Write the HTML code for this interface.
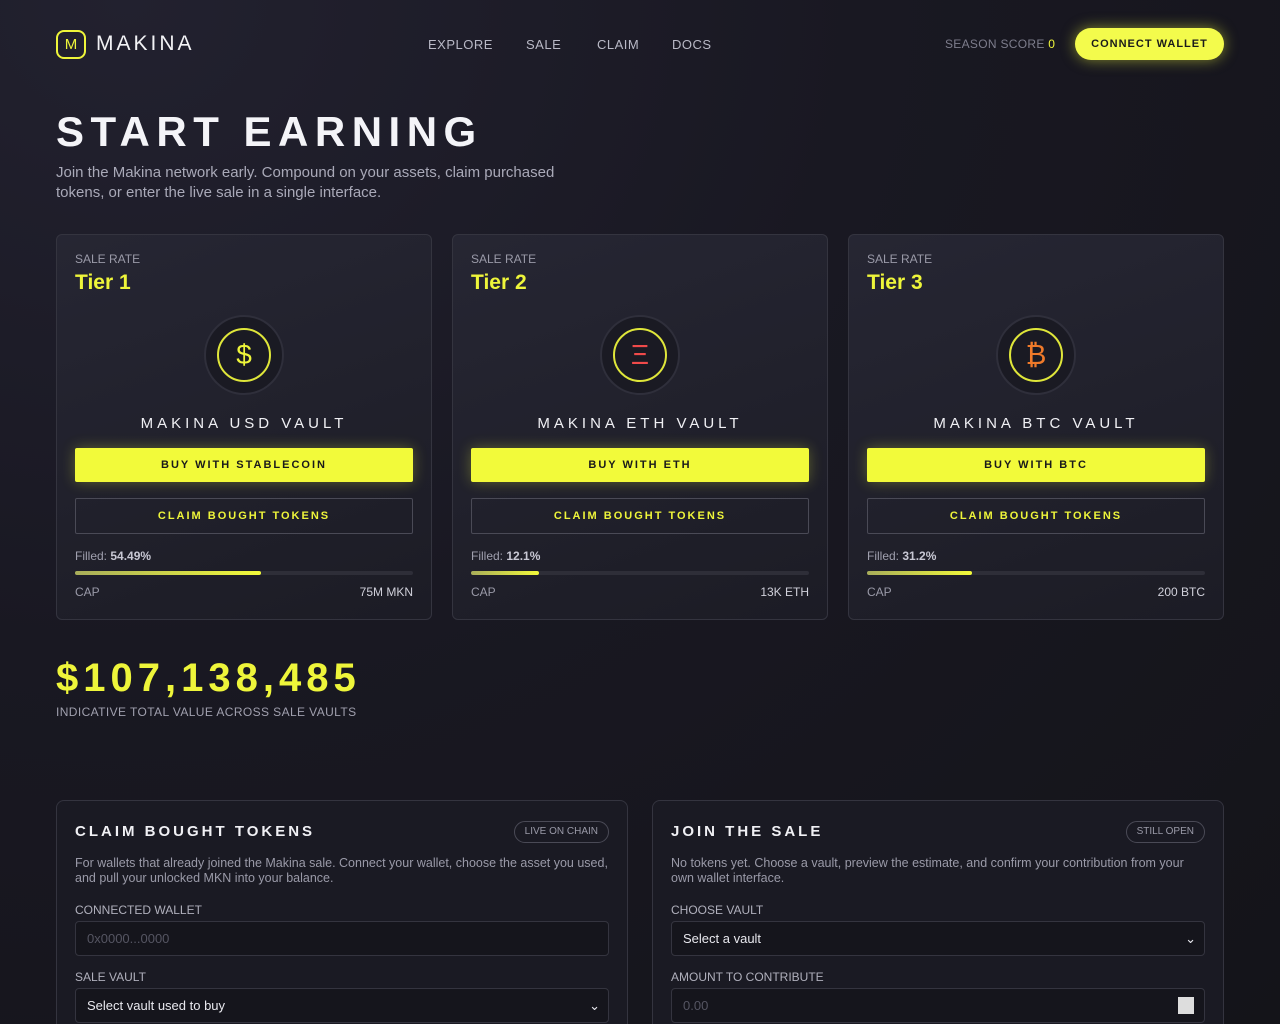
<!DOCTYPE html>
<html style="background:#141419"><head><meta charset="utf-8"><style>
*{box-sizing:border-box;margin:0;padding:0}
html,body{width:1280px;height:1024px;overflow:hidden}
body{background:radial-gradient(ellipse at 10% 0%,#22212f 0%,#191822 45%,#141419 100%);font-family:"Liberation Sans",sans-serif;color:#e8e8ee;position:relative}
.a{position:absolute}
.logo{left:56px;top:30px;width:30px;height:29px;border:2px solid #eef53a;border-radius:8px;color:#eef53a;font-size:15px;text-align:center;line-height:25px}
.brand{left:96px;top:32px;font-size:21px;letter-spacing:3px;color:#f2f2f5}
.nav{top:37px;font-size:13px;color:#b9b9c6;letter-spacing:.5px}
.score{left:945px;top:37px;font-size:12px;color:#7d7d8c;letter-spacing:.3px}
.cw{left:1075px;top:28px;width:149px;height:32px;border-radius:16px;background:#f3fb4c;box-shadow:0 0 14px rgba(240,250,60,.5);color:#1a1a1a;font-weight:bold;font-size:11px;letter-spacing:1px;text-align:center;line-height:32px}
h1{position:absolute;left:56px;top:108px;font-size:42px;letter-spacing:6.5px;font-weight:bold;color:#f4f4f8}
.sub{left:56px;top:163px;font-size:15px;line-height:20px;color:#a9a9b8;width:500px}
.card{top:234px;width:376px;height:386px;border:1px solid #34343f;border-radius:6px;background:linear-gradient(160deg,#262633,#1c1c25)}
.sr{position:absolute;left:18px;top:17px;font-size:12px;color:#9a9aa8}
.tier{position:absolute;left:18px;top:36px;font-size:21px;font-weight:bold;color:#eef53a}
.ico{position:absolute;left:147px;top:80px;width:80px;height:80px;border-radius:50%;background:#1a1a23;border:2px solid #2f2f3b}
.ico div{position:absolute;left:11px;top:11px;width:54px;height:54px;border:2px solid #dfe63a;border-radius:50%;text-align:center;line-height:50px;font-size:28px}
.vn{position:absolute;left:0;width:100%;top:180px;text-align:center;font-size:15px;letter-spacing:4px;color:#f0f0f4}
.buy{position:absolute;left:18px;top:213px;width:338px;height:34px;background:#f2fa3a;border-radius:2px;box-shadow:0 0 14px rgba(240,250,60,.3);color:#1a1a1a;font-weight:bold;font-size:11px;letter-spacing:2px;text-align:center;line-height:34px}
.clm{position:absolute;left:18px;top:263px;width:338px;height:36px;border:1px solid #4a4a56;border-radius:2px;color:#eef53a;font-weight:bold;font-size:11px;letter-spacing:2px;text-align:center;line-height:34px}
.fl{position:absolute;left:18px;top:314px;font-size:12px;color:#a0a0ae}
.fl b{color:#c8c8d4}
.bar{position:absolute;left:18px;top:336px;width:338px;height:4px;background:#2e2e38;border-radius:2px}
.bar i{display:block;height:4px;background:linear-gradient(90deg,#a8ad5a,#f2fa3a);border-radius:2px}
.cap{position:absolute;left:18px;top:350px;width:338px;font-size:12px;color:#9a9aa8}
.cap span{float:right;color:#d0d0da}
.big{left:56px;top:656px;font-size:40px;font-weight:bold;color:#eef53a;letter-spacing:5px}
.ind{left:56px;top:705px;font-size:12px;color:#a0a0ae;letter-spacing:.4px}
.pn{top:800px;width:572px;height:240px;border:1px solid #34343f;border-radius:8px;background:#1a1a23}
.pt{position:absolute;left:18px;top:22px;font-size:15px;letter-spacing:3px;font-weight:bold;color:#f0f0f4}
.pill{position:absolute;right:18px;top:20px;height:22px;border:1px solid #4a4a56;border-radius:11px;padding:0 10px;font-size:10px;line-height:20px;color:#9a9aa8}
.pd{position:absolute;left:18px;top:55px;width:535px;font-size:12.5px;line-height:15px;color:#9a9aa8}
.lb{position:absolute;left:18px;font-size:12px;color:#b0b0bc}
.in{position:absolute;left:18px;width:534px;height:35px;border:1px solid #34343f;border-radius:4px;background:#15151c;font-size:13px;line-height:33px;padding-left:11px}
</style></head><body>
<div class="a logo">M</div><div class="a brand">MAKINA</div>
<div class="a nav" style="left:428px">EXPLORE</div>
<div class="a nav" style="left:526px">SALE</div>
<div class="a nav" style="left:597px">CLAIM</div>
<div class="a nav" style="left:672px">DOCS</div>
<div class="a score">SEASON SCORE <span style="color:#eef53a">0</span></div>
<div class="a cw">CONNECT WALLET</div>
<h1>START EARNING</h1>
<div class="a sub">Join the Makina network early. Compound on your assets, claim purchased tokens, or enter the live sale in a single interface.</div>

<div class="a card" style="left:56px"><div class="sr">SALE RATE</div><div class="tier">Tier 1</div><div class="ico"><div style="color:#eef53a">$</div></div><div class="vn">MAKINA USD VAULT</div><div class="buy">BUY WITH STABLECOIN</div><div class="clm">CLAIM BOUGHT TOKENS</div><div class="fl">Filled: <b>54.49%</b></div><div class="bar"><i style="width:55%"></i></div><div class="cap">CAP<span>75M MKN</span></div></div>
<div class="a card" style="left:452px"><div class="sr">SALE RATE</div><div class="tier">Tier 2</div><div class="ico"><div style="color:#f04a4a">Ξ</div></div><div class="vn">MAKINA ETH VAULT</div><div class="buy">BUY WITH ETH</div><div class="clm">CLAIM BOUGHT TOKENS</div><div class="fl">Filled: <b>12.1%</b></div><div class="bar"><i style="width:20%"></i></div><div class="cap">CAP<span>13K ETH</span></div></div>
<div class="a card" style="left:848px"><div class="sr">SALE RATE</div><div class="tier">Tier 3</div><div class="ico"><div style="color:#f07a2a">₿</div></div><div class="vn">MAKINA BTC VAULT</div><div class="buy">BUY WITH BTC</div><div class="clm">CLAIM BOUGHT TOKENS</div><div class="fl">Filled: <b>31.2%</b></div><div class="bar"><i style="width:31%"></i></div><div class="cap">CAP<span>200 BTC</span></div></div>

<div class="a big">$107,138,485</div>
<div class="a ind">INDICATIVE TOTAL VALUE ACROSS SALE VAULTS</div>

<div class="a pn" style="left:56px"><div class="pt">CLAIM BOUGHT TOKENS</div><div class="pill">LIVE ON CHAIN</div><div class="pd">For wallets that already joined the Makina sale. Connect your wallet, choose the asset you used, and pull your unlocked MKN into your balance.</div><div class="lb" style="top:102px">CONNECTED WALLET</div><div class="in" style="top:120px;color:#555562">0x0000...0000</div><div class="lb" style="top:169px">SALE VAULT</div><div class="in" style="top:187px;color:#e8e8ee">Select vault used to buy<span style="position:absolute;right:8px">⌄</span></div></div>
<div class="a pn" style="left:652px"><div class="pt">JOIN THE SALE</div><div class="pill">STILL OPEN</div><div class="pd">No tokens yet. Choose a vault, preview the estimate, and confirm your contribution from your own wallet interface.</div><div class="lb" style="top:102px">CHOOSE VAULT</div><div class="in" style="top:120px;color:#e8e8ee">Select a vault<span style="position:absolute;right:8px">⌄</span></div><div class="lb" style="top:169px">AMOUNT TO CONTRIBUTE</div><div class="in" style="top:187px;color:#555562">0.00<span style="position:absolute;right:10px;top:8px;width:16px;height:17px;background:#ddd"></span></div></div>
</body></html>
